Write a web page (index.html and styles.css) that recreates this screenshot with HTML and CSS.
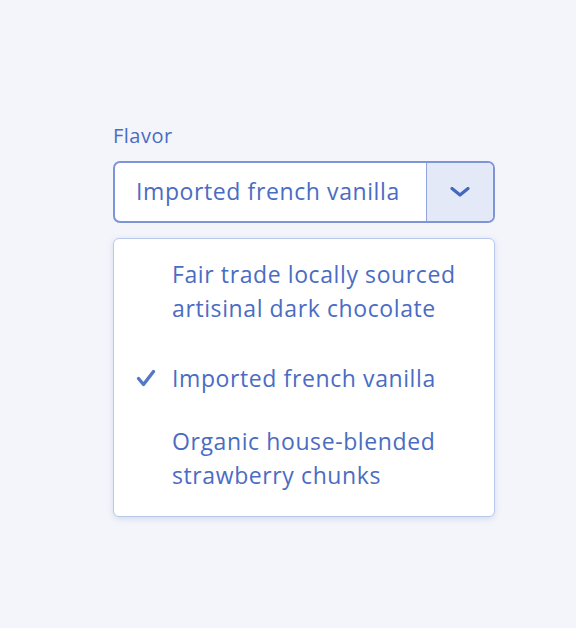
FILE: index.html
```html
<!DOCTYPE html>
<html>
<head>
<meta charset="utf-8">
<link rel="stylesheet" href="styles.css">
</head>
<body>
<div class="field">
  <div class="label">Flavor</div>
  <div class="select">
    <div class="value">Imported french vanilla</div>
    <div class="button">
      <svg width="20" height="10" viewBox="0 0 20 10"><path d="M2 1.5 L10 8 L18 1.5" fill="none" stroke="#4567c0" stroke-width="3.2" stroke-linecap="round" stroke-linejoin="round"/></svg>
    </div>
  </div>
  <ul class="menu">
    <li class="option"><span class="check"></span><span class="text">Fair trade locally sourced artisinal dark chocolate</span></li>
    <li class="option selected"><span class="check"><svg width="20" height="18" viewBox="0 0 20 18"><path d="M2.5 9.5 L7.5 15.5 L17.5 2.5" fill="none" stroke="#5676c6" stroke-width="3.4" stroke-linecap="round" stroke-linejoin="round"/></svg></span><span class="text">Imported french vanilla</span></li>
    <li class="option"><span class="check"></span><span class="text">Organic house-blended strawberry chunks</span></li>
  </ul>
</div>
</body>
</html>
```
FILE: styles.css
```css
html, body {
  margin: 0;
  padding: 0;
  background: #f4f5fb;
}
body {
  font-family: "Open Sans", "Noto Sans", sans-serif;
  color: #4a6cc3;
  width: 576px;
  height: 628px;
}
.field {
  padding: 123px 0 0 113px;
  width: 382px;
}
.label {
  font-size: 20px;
  letter-spacing: 0.5px;
  line-height: 26px;
  margin-bottom: 12px;
}
.select {
  display: flex;
  height: 62px;
  box-sizing: border-box;
  border: 2px solid #7d94d7;
  border-radius: 7px;
  background: #fff;
  overflow: hidden;
}
.value {
  flex: 1;
  display: flex;
  align-items: center;
  padding: 0 0 3px 21px;
  font-size: 23px;
  letter-spacing: 0.6px;
}
.button {
  width: 66px;
  background: #e3e9f7;
  border-left: 1px solid #8fa3dc;
  display: flex;
  align-items: center;
  justify-content: center;
}
.menu {
  list-style: none;
  margin: 15px 0 0;
  padding: 18px 0 0;
  background: #fff;
  border: 1px solid #b9c8ec;
  border-radius: 6px;
  box-shadow: 0 2px 6px rgba(140, 160, 210, 0.3);
  box-sizing: border-box;
  height: 279px;
}
.option {
  display: flex;
  align-items: flex-start;
  padding: 0 16px 0 22px;
  font-size: 23px;
  letter-spacing: 0.6px;
  line-height: 34px;
  margin-bottom: 36px;
}
.option.selected { margin-bottom: 29px; }
.option:last-child { margin-bottom: 0; }
.check {
  width: 36px;
  flex: none;
  display: flex;
  align-items: center;
  height: 34px;
}
.text { flex: 1; }
```
